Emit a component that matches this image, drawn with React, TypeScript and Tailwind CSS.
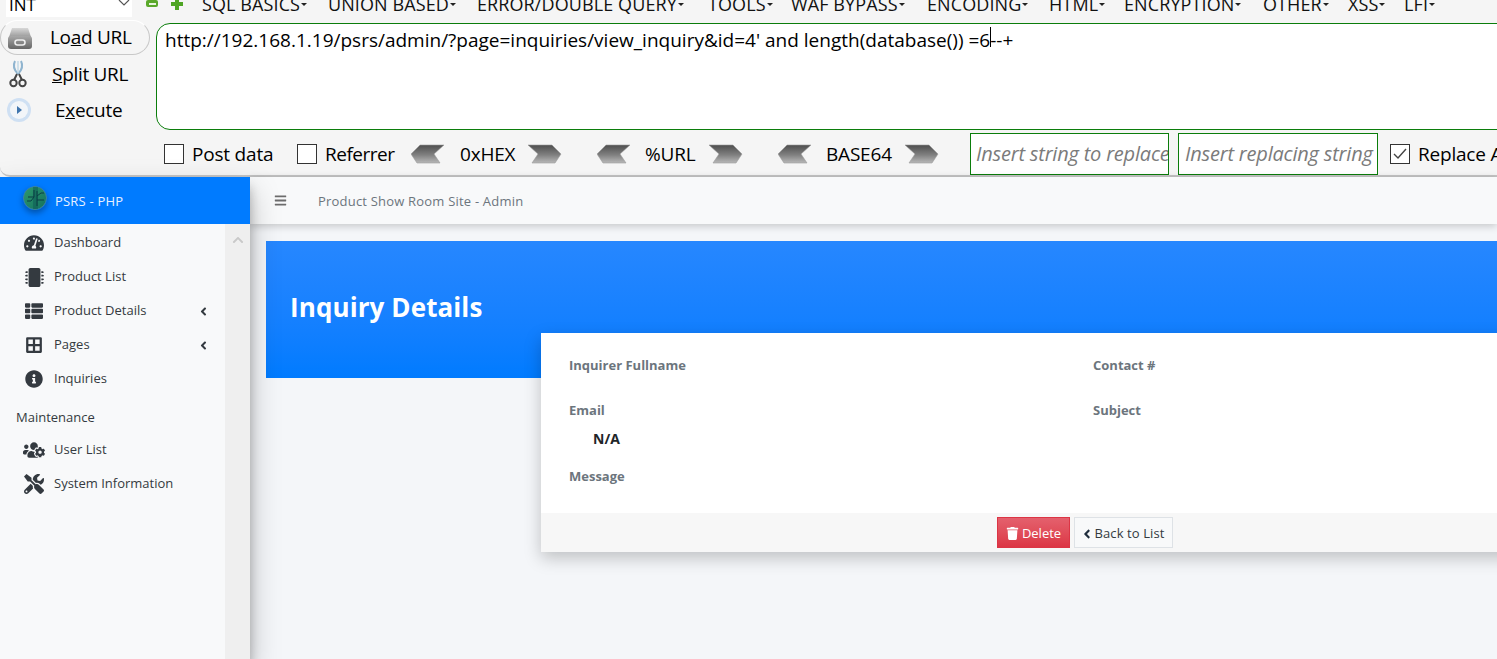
import {
  FaAngleLeft,
  FaBars,
  FaBorderAll,
  FaChevronUp,
  FaInfoCircle,
  FaMicrochip,
  FaTachometerAlt,
  FaThList,
  FaTools,
  FaTrash,
  FaUsersCog,
} from "react-icons/fa";
import type { ReactNode } from "react";

const MENUS = [
  { label: "SQL BASICS", width: "w-[126px]" },
  { label: "UNION BASED", width: "w-[149px]" },
  { label: "ERROR/DOUBLE QUERY", width: "w-[231px]" },
  { label: "TOOLS", width: "w-[83px]" },
  { label: "WAF BYPASS", width: "w-[136px]" },
  { label: "ENCODING", width: "w-[122px]" },
  { label: "HTML", width: "w-[75px]" },
  { label: "ENCRYPTION", width: "w-[139px]" },
  { label: "OTHER", width: "w-[85px]" },
  { label: "XSS", width: "w-[56px]" },
  { label: "LFI", width: "w-[40px]" },
];

function HackbarIcon({ kind }: { kind: "load" | "split" | "exec" }) {
  if (kind === "load") {
    return (
      <svg width="26" height="26" viewBox="0 0 26 26">
        <defs>
          <linearGradient id="loadTop" x1="0" y1="0" x2="0" y2="1">
            <stop offset="0" stopColor="#d8d8d8" />
            <stop offset="1" stopColor="#9a9a9a" />
          </linearGradient>
          <linearGradient id="loadBody" x1="0" y1="0" x2="0" y2="1">
            <stop offset="0" stopColor="#a8a8a8" />
            <stop offset="1" stopColor="#666" />
          </linearGradient>
        </defs>
        <path d="M5 3h16l3 9H2z" fill="url(#loadTop)" />
        <rect x="1" y="11" width="24" height="13" rx="3" fill="url(#loadBody)" />
        <rect x="8" y="15" width="10" height="5" rx="2.5" fill="none" stroke="#eee" strokeWidth="1.6" />
      </svg>
    );
  }
  if (kind === "split") {
    return (
      <svg width="18" height="28" viewBox="0 0 18 28">
        <path d="M6 1c-2 4-1 9 3 13M12 1c2 4 1 9-3 13" fill="none" stroke="#8fb4cf" strokeWidth="2" />
        <path d="M9 1v12" stroke="#c2d8e6" strokeWidth="1.5" />
        <path d="M8 14l-3 6M10 14l3 6" stroke="#444" strokeWidth="2" />
        <circle cx="4.5" cy="23" r="3.2" fill="none" stroke="#444" strokeWidth="2" />
        <circle cx="13.5" cy="23" r="3.2" fill="none" stroke="#444" strokeWidth="2" />
      </svg>
    );
  }
  return (
    <svg width="26" height="26" viewBox="0 0 26 26">
      <circle cx="13" cy="13" r="12" fill="#cfe0f3" />
      <circle cx="13" cy="13" r="9" fill="#f2f5f9" />
      <path d="M11 9l5 4-5 4z" fill="#3f74ad" />
    </svg>
  );
}

function Chevron({ right }: { right?: boolean }) {
  const d = right ? "M0 1h24l9 9-6 9H4l6-9z" : "M33 1H9l-9 9 6 9h23l-6-9z";
  const id = right ? "chevR" : "chevL";
  return (
    <svg width="34" height="20" viewBox="0 0 34 20" className="shrink-0">
      <defs>
        <linearGradient id={id} x1="0" y1="0" x2="0" y2="1">
          <stop offset="0" stopColor="#4e4e4e" />
          <stop offset="0.55" stopColor="#808080" />
          <stop offset="1" stopColor="#b8b8b8" />
        </linearGradient>
      </defs>
      <path d={d} fill={`url(#${id})`} stroke="#9a9a9a" strokeWidth="0.6" />
    </svg>
  );
}

function Logo() {
  return (
    <svg width="24" height="24" viewBox="0 0 24 24" className="rounded-full shadow-[0_3px_6px_rgba(0,0,0,0.35)]">
      <defs>
        <linearGradient id="logoFill" x1="0" y1="0" x2="1" y2="1">
          <stop offset="0" stopColor="#2f9a6b" />
          <stop offset="1" stopColor="#13705f" />
        </linearGradient>
      </defs>
      <circle cx="12" cy="12" r="11.5" fill="url(#logoFill)" stroke="#3d7f9e" />
      <rect x="10" y="1" width="5" height="22" fill="#0f5f57" opacity="0.6" />
      <path
        d="M11 4v7H5M11 11l-3 4H4M14 5v5l4-3h3M14 10v4h7M14 14v6"
        fill="none"
        stroke="#0b3f45"
        strokeWidth="1"
      />
    </svg>
  );
}

function NavItem({ icon, label, arrow }: { icon: ReactNode; label: string; arrow?: boolean }) {
  return (
    <div className="flex h-[34px] items-center text-[13px] text-[#343a40]">
      <span className="flex w-[54px] shrink-0 justify-center pl-[16px] pr-[2px] text-[#343a40]">{icon}</span>
      <span>{label}</span>
      {arrow && <FaAngleLeft className="ml-auto mr-[15px] text-[13px] text-[#343a40]" />}
    </div>
  );
}

function Field({ label }: { label: string }) {
  return <div className="h-[20px] text-[13px] leading-[20px] font-bold text-[#6c757d]">{label}</div>;
}

export default function App() {
  return (
    <div className="flex h-[659px] w-[1497px] flex-col overflow-hidden bg-[#f4f6f9] font-['Open_Sans','Noto_Sans',sans-serif]">
      {/* hackbar */}
      <div className="h-[177px] shrink-0 rounded-bl-[10px] border-b-2 border-[#c4c4c4] bg-[#f5f5f5] text-black">
        <div className="flex h-[23px]">
          <div className="relative ml-[6px] h-[17px] w-[126px] shrink-0 overflow-hidden bg-white pl-[3px] text-[17px] leading-[9px]">
            INT
            <svg width="12" height="7" viewBox="0 0 12 7" className="absolute right-[2px] top-0">
              <path d="M1 0l5 5 5-5" fill="none" stroke="#555" strokeWidth="1.2" />
            </svg>
          </div>
          <div className="ml-[14px] flex h-[7px] w-[12px] shrink-0 items-center justify-center rounded-[2px] bg-[#5aa82a]">
            <span className="h-[2px] w-[7px] bg-[#e8f5de]" />
          </div>
          <svg width="14" height="12" viewBox="0 0 14 12" className="ml-[12px] shrink-0">
            <path d="M5 -2h4v4h4v4H9v4H5V6H1V2h4z" fill="#4fa524" />
          </svg>
          <div className="ml-[18px] flex h-[7px] items-center text-[18px] leading-none tracking-[0.1px] text-[#111]">
            {MENUS.map((m) => (
              <div key={m.label} className={`flex shrink-0 items-center whitespace-nowrap ${m.width}`}>
                {m.label}
                <span className="ml-[1px] mt-[2px] border-x-[3px] border-t-[3px] border-x-transparent border-t-[#222]" />
              </div>
            ))}
          </div>
        </div>

        <div className="flex h-[108px]">
          <div className="w-[156px] shrink-0">
            <div className="-mt-[3px] flex h-[35px] w-[150px] items-center rounded-[18px] border border-[#c8c8c8] border-t-white pl-[6px]">
              <HackbarIcon kind="load" />
              <span className="ml-[17px] text-[19px] tracking-[-0.3px]">Lo<u>a</u>d URL</span>
            </div>
            <div className="flex h-[38px] items-center pl-[9px]">
              <HackbarIcon kind="split" />
              <span className="ml-[25px] text-[19px] tracking-[-0.3px]"><u>S</u>plit URL</span>
            </div>
            <div className="flex h-[34px] items-center pl-[6px]">
              <HackbarIcon kind="exec" />
              <span className="ml-[23px] text-[19px] tracking-[-0.3px]">E<u>x</u>ecute</span>
            </div>
          </div>
          <div className="h-[107px] w-[1400px] shrink-0 rounded-[14px] border border-[#0b7d0b] bg-white pl-[8px] pt-[3px] text-[19px] leading-[26px] whitespace-nowrap">
            http://192.168.1.19/psrs/admin/?page=inquiries/view_inquiry&amp;id=4' and length(database()) =6<span className="relative"><span className="absolute left-0 top-0 h-[20px] w-px bg-black" />--+</span>
          </div>
        </div>

        <div className="mt-[2px] flex h-[42px] items-center text-[19px] tracking-[-0.2px]">
          <span className="ml-[164px] h-[20px] w-[20px] shrink-0 border border-[#333] bg-white" />
          <span className="ml-[8px] w-[105px] shrink-0">Post data</span>
          <span className="h-[20px] w-[20px] shrink-0 border border-[#333] bg-white" />
          <span className="ml-[8px] w-[86px] shrink-0 tracking-[-0.5px]">Referrer</span>
          <Chevron />
          <span className="ml-[15px] w-[68px] shrink-0">0xHEX</span>
          <Chevron right />
          <span className="w-[35px] shrink-0" />
          <Chevron />
          <span className="ml-[14px] w-[64px] shrink-0">%URL</span>
          <Chevron right />
          <span className="w-[35px] shrink-0" />
          <Chevron />
          <span className="ml-[14px] w-[79px] shrink-0">BASE64</span>
          <Chevron right />
          <span className="ml-[31px] h-[42px] w-[199px] shrink-0 overflow-hidden border border-[#0b7d0b] bg-white pl-[5px] text-[20px] leading-[40px] whitespace-nowrap text-[#7b7b7b] italic">
            Insert string to replace
          </span>
          <span className="ml-[9px] h-[42px] w-[200px] shrink-0 overflow-hidden border border-[#0b7d0b] bg-white pl-[6px] text-[20px] leading-[40px] whitespace-nowrap text-[#7b7b7b] italic">
            Insert replacing string
          </span>
          <span className="ml-[12px] flex h-[20px] w-[20px] shrink-0 items-center justify-center border border-[#333] bg-white">
            <svg width="14" height="12" viewBox="0 0 14 12">
              <path d="M1 6l4 4 8-9" fill="none" stroke="#444" strokeWidth="1.4" />
            </svg>
          </span>
          <span className="ml-[8px] whitespace-nowrap">Replace All</span>
        </div>
      </div>

      {/* admin page */}
      <div className="flex min-h-0 flex-1">
        <aside className="relative z-20 flex w-[250px] shrink-0 flex-col bg-[#f8f9fa] shadow-[0_14px_28px_rgba(0,0,0,0.25),0_10px_10px_rgba(0,0,0,0.22)]">
          <div className="flex h-[47px] shrink-0 items-center bg-[#007bff] pb-[5px] pl-[23px] text-[13px] text-[#e8f1ff]">
            <Logo />
            <span className="ml-[8px] mt-[7px] tracking-[0.2px]">PSRS - PHP</span>
          </div>
          <div className="flex min-h-0 flex-1">
            <nav className="w-[225px] shrink-0 pt-[2px]">
              <NavItem icon={<FaTachometerAlt className="text-[20px]" />} label="Dashboard" />
              <NavItem icon={<FaMicrochip className="text-[19px]" />} label="Product List" />
              <NavItem icon={<FaThList className="text-[18px]" />} label="Product Details" arrow />
              <NavItem icon={<FaBorderAll className="text-[18px]" />} label="Pages" arrow />
              <NavItem icon={<FaInfoCircle className="text-[18px]" />} label="Inquiries" />
              <div className="h-[37px] pl-[16px] pt-[11px] text-[13px] leading-[20px] text-[#343a40]">Maintenance</div>
              <NavItem icon={<FaUsersCog className="text-[22px]" />} label="User List" />
              <NavItem icon={<FaTools className="text-[20px]" />} label="System Information" />
            </nav>
            <div className="flex flex-1 justify-center bg-[#efefef] pt-[10px]">
              <FaChevronUp className="text-[12px] text-[#c9c9c9]" />
            </div>
          </div>
        </aside>

        <div className="flex min-w-0 flex-1 flex-col">
          <header className="relative z-10 flex h-[47px] shrink-0 items-center bg-[#f8f9fa] pl-[24px] text-[13px] tracking-[0.2px] text-[#6c757d] shadow-[0_2px_8px_rgba(0,0,0,0.2)]">
            <FaBars className="text-[13px] text-[#6c6c6c]" />
            <span className="ml-[31px] mt-[3px]">Product Show Room Site - Admin</span>
          </header>
          <main className="min-w-0 flex-1 overflow-hidden pl-[16px] pt-[17px]">
            <div className="h-[137px] bg-gradient-to-b from-[#2687ff] to-[#007bff] pl-[24px] pt-[48px] text-[26px] leading-[36px] font-bold tracking-[0.1px] text-white">
              Inquiry Details
            </div>
            <div className="ml-[275px] -mt-[45px] w-[1088px] shadow-[0_6px_16px_rgba(0,0,0,0.22)]">
              <div className="h-[180px] bg-white pl-[28px] pt-[22px]">
                <div className="grid grid-cols-[524px_1fr] gap-y-[25px]">
                  <Field label="Inquirer Fullname" />
                  <Field label="Contact #" />
                  <Field label="Email" />
                  <Field label="Subject" />
                </div>
                <div className="ml-[24px] mt-[9px] h-[20px] text-[14px] leading-[20px] font-bold text-[#212529]">N/A</div>
                <div className="mt-[17px]">
                  <Field label="Message" />
                </div>
              </div>
              <div className="flex h-[39px] justify-center gap-[4px] bg-[#f7f7f7] pt-[4px]">
                <button className="flex h-[31px] w-[73px] items-center justify-center gap-[3px] border border-[#dc3545] bg-gradient-to-b from-[#e4606d] to-[#dc3545] pt-[2px] text-[13px] text-white">
                  <FaTrash className="text-[13px]" /> Delete
                </button>
                <button className="flex h-[31px] w-[99px] items-center justify-center gap-[1px] border border-[#dee2e6] bg-[#f8f9fa] pr-[3px] pt-[2px] text-[13px] tracking-[0.1px] text-[#343a40]">
                  <FaAngleLeft className="text-[14px] text-[#1f2d3d]" /> Back to List
                </button>
              </div>
            </div>
          </main>
        </div>
      </div>
    </div>
  );
}
